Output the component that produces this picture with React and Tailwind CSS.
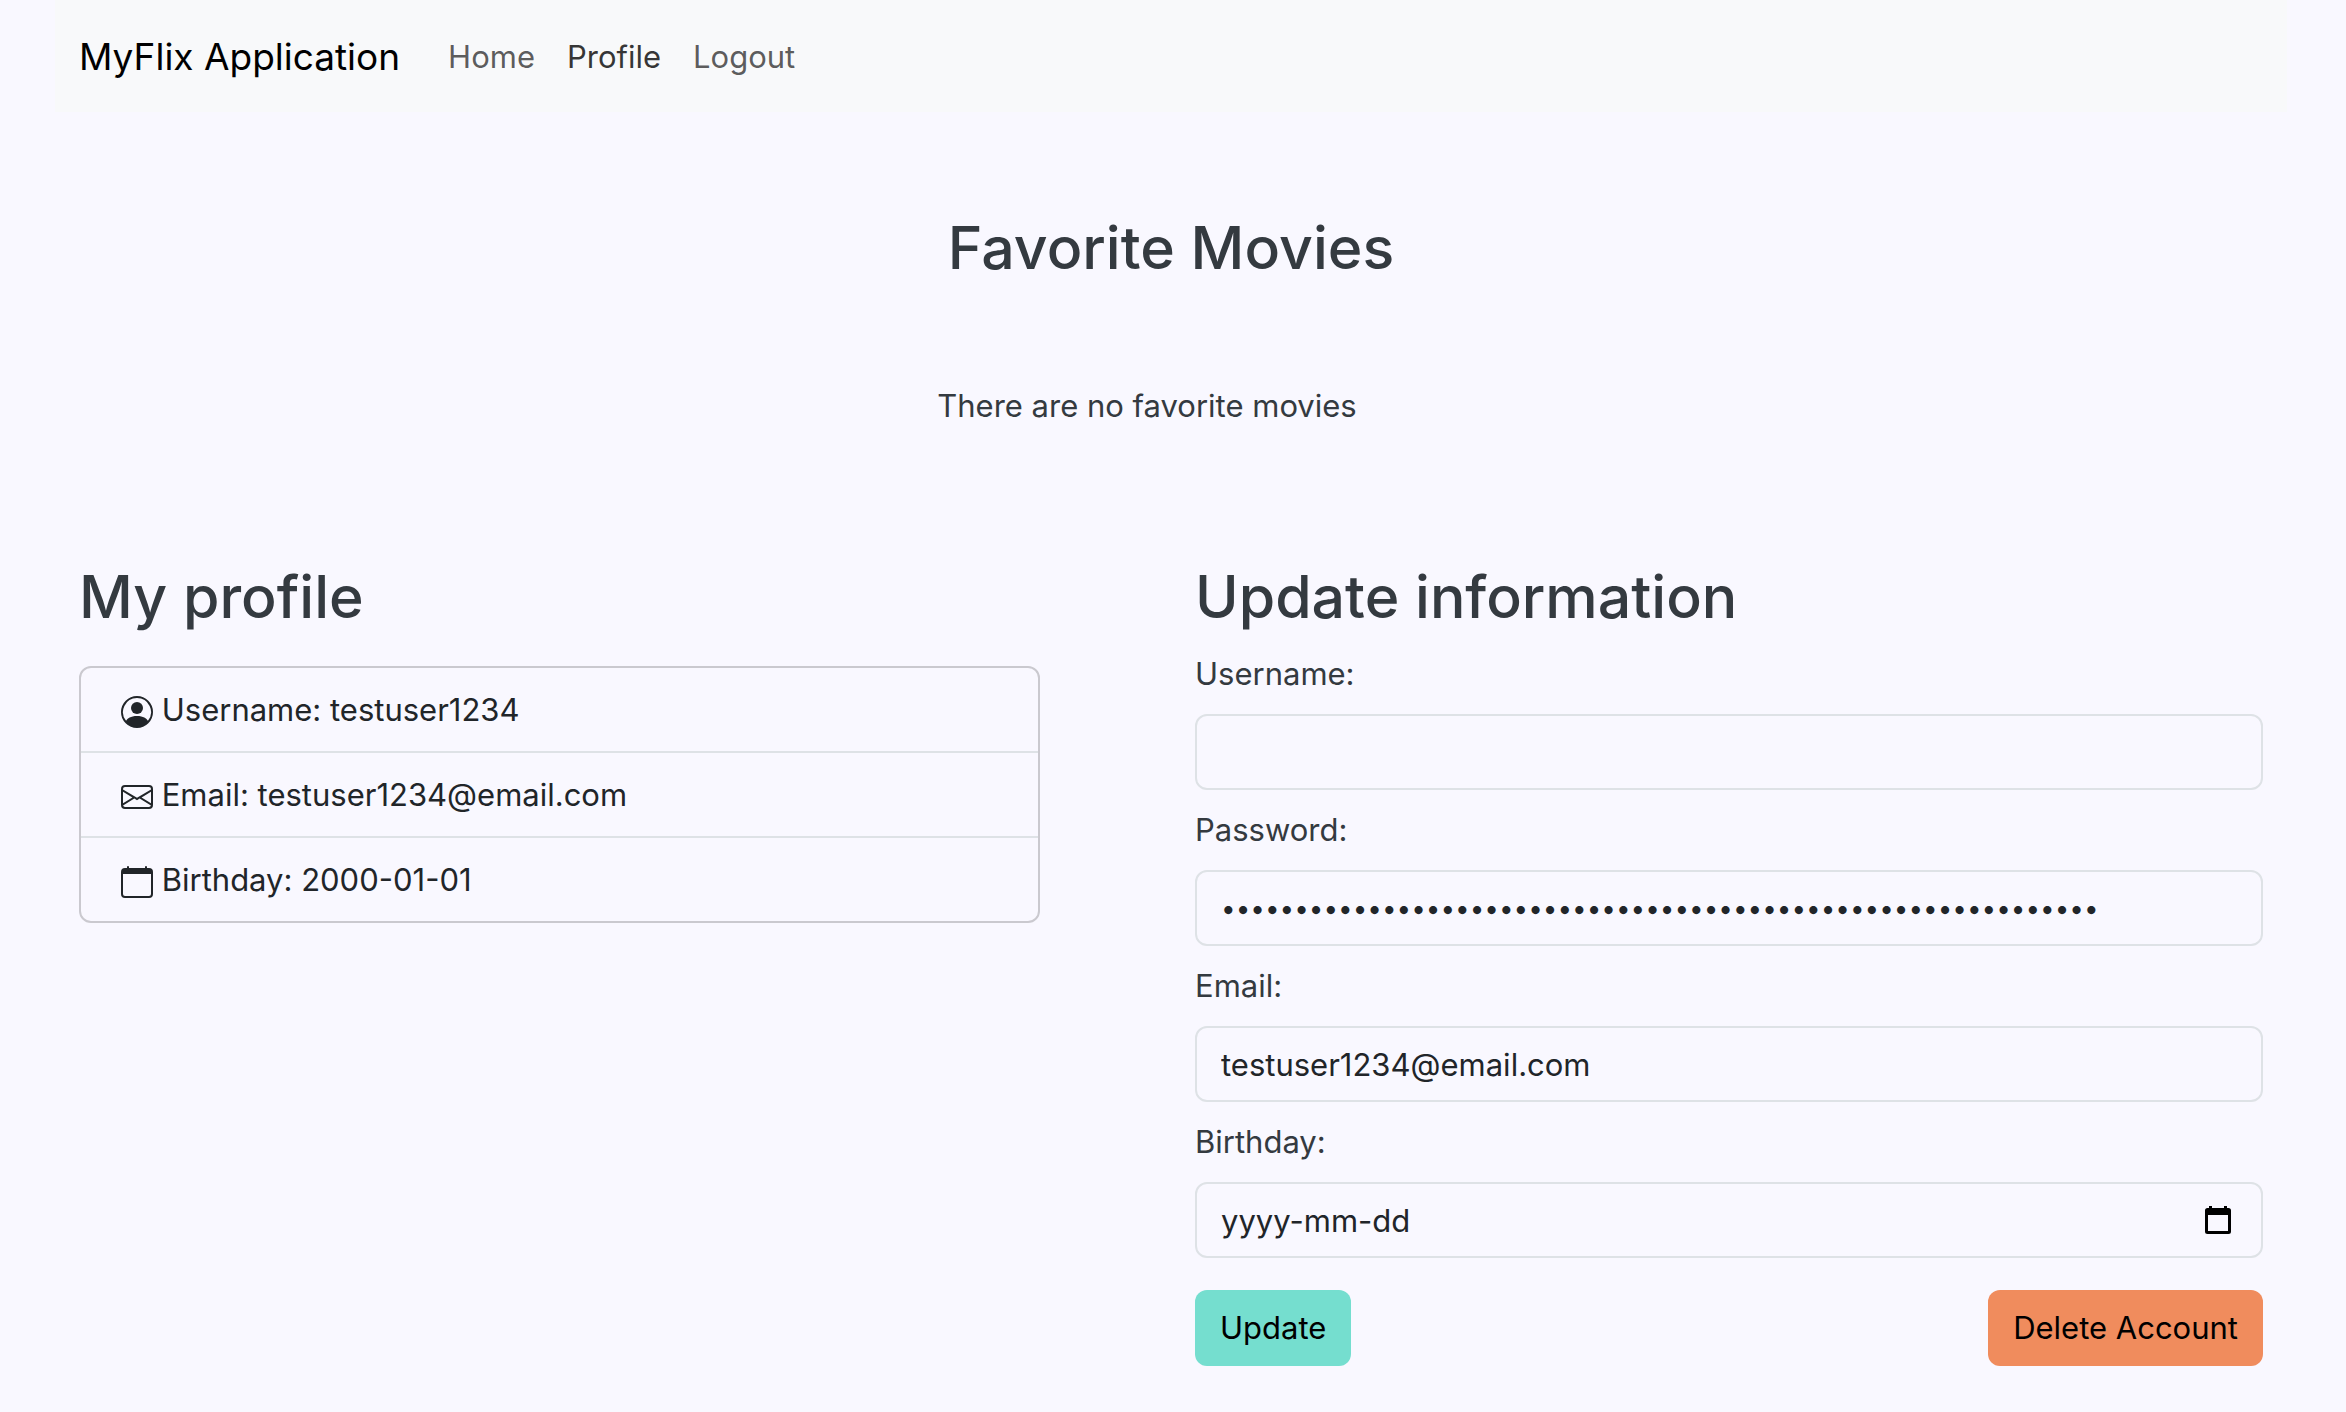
import React from "react";
import { BsPersonCircle, BsEnvelope, BsCalendar } from "react-icons/bs";

const inputClass =
  "block h-[76px] w-full rounded-xl border-2 border-[#dee2e6] bg-transparent px-6 text-[#212529] placeholder:text-[#212529] placeholder:opacity-100 outline-none focus:border-[#86b7fe]";

const headingClass = "text-[59px] font-medium leading-[77px]";

function Field({ id, label, children }) {
  return (
    <div className="mb-4">
      <label htmlFor={id} className="mb-4 block">
        {label}
      </label>
      {children}
    </div>
  );
}

function NavBar() {
  return (
    <nav className="flex h-28 items-center bg-[#f8f9fa] px-6 pt-0.5">
      <a href="#home" className="mr-8 text-[37px] text-black">
        MyFlix Application
      </a>
      <ul className="flex">
        <li>
          <a href="#home" className="px-4 text-black/65">Home</a>
        </li>
        <li>
          <a href="#profile" aria-current="page" className="px-4 text-black/80">Profile</a>
        </li>
        <li>
          <a href="#logout" className="px-4 text-black/65">Logout</a>
        </li>
      </ul>
    </nav>
  );
}

function ProfileRow({ icon: Icon, children }) {
  return (
    <li className="px-10 py-[18px] leading-[47px]">
      <Icon className="inline align-[-7px]" size={32} aria-hidden="true" /> {children}
    </li>
  );
}

function DateIcon() {
  return (
    <svg width="26" height="28" viewBox="0 0 26 28" aria-hidden="true">
      <path
        fill="#000"
        fillRule="evenodd"
        d="M4 0h3v2h12V0h3v2h1.500a2.500 2.500 0 0 1 2.500 2.500V25.500a2.500 2.500 0 0 1-2.500 2.500H2.500A2.500 2.500 0 0 1 0 25.500V4.500A2.500 2.500 0 0 1 2.500 2H4zM3 9v16h20V9z"
      />
    </svg>
  );
}

export default function App() {
  return (
    <div className="min-h-screen bg-[#f9f8ff] pr-[59px] pb-11 pl-[55px] font-['Inter',sans-serif] text-[31px] leading-[48px] text-[#343a40]">
      <NavBar />
      <main className="px-6">
        <section className="pt-[97px] text-center">
          <h2 className={headingClass}>Favorite Movies</h2>
          <p className="mt-24 pr-12">There are no favorite movies</p>
        </section>

        <div className="mt-32 grid grid-cols-2 gap-12">
          <section>
            <h2 className={headingClass}>My profile</h2>
            <ul className="mt-[31px] w-[90%] divide-y-2 divide-[#dee2e6] rounded-xl border-2 border-[#cac9cf] text-[#212529]">
              <ProfileRow icon={BsPersonCircle}>Username: testuser1234</ProfileRow>
              <ProfileRow icon={BsEnvelope}>Email: testuser1234@email.com</ProfileRow>
              <ProfileRow icon={BsCalendar}>Birthday: 2000-01-01</ProfileRow>
            </ul>
          </section>

          <section>
            <h2 className={headingClass}>Update information</h2>
            <form className="mt-[15px]" onSubmit={(e) => e.preventDefault()}>
              <Field id="username" label="Username:">
                <input id="username" type="text" className={inputClass} />
              </Field>
              <Field id="password" label="Password:">
                <input
                  id="password"
                  type="password"
                  defaultValue={"x".repeat(60)}
                  className={`${inputClass} text-[26px]`}
                />
              </Field>
              <Field id="email" label="Email:">
                <input id="email" type="email" defaultValue="testuser1234@email.com" className={inputClass} />
              </Field>
              <Field id="birthday" label="Birthday:">
                <div className="relative">
                  <input id="birthday" type="text" placeholder="yyyy-mm-dd" className={inputClass} />
                  <button type="button" aria-label="Choose date" className="absolute inset-y-0 right-8 flex items-center">
                    <DateIcon />
                  </button>
                </div>
              </Field>
              <div className="flex justify-between pt-4">
                <button type="submit" className="h-[76px] rounded-xl bg-[#75decf] px-[25px] text-black">
                  Update
                </button>
                <button type="button" className="h-[76px] rounded-xl bg-[#f08c5d] px-[25px] text-black">
                  Delete Account
                </button>
              </div>
            </form>
          </section>
        </div>
      </main>
    </div>
  );
}
